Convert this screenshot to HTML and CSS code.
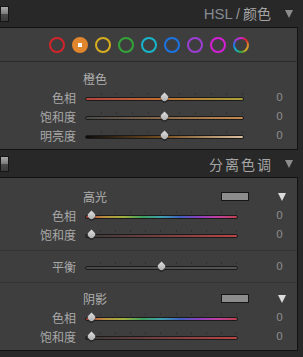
FILE: index.html
```html
<html>
  <head>
    <title>HSL / 颜色</title>
    <meta name="viewport" content="width=device-width, initial-scale=1.0" />
    <link rel="stylesheet" href="styles.css">
  </head>
  <body>
    <div class="hdr">
      <span class="sw"></span>
      <span class="ttl"><span class="en">HSL</span> <span class="sl">/</span> 颜色</span>
      <span class="tri"></span>
    </div>

    <div class="panel dots">
      <span class="dot red"></span>
      <span class="dot orange on"></span>
      <span class="dot yellow"></span>
      <span class="dot green"></span>
      <span class="dot aqua"></span>
      <span class="dot blue"></span>
      <span class="dot purple"></span>
      <span class="dot magenta"></span>
      <span class="dot all"></span>
    </div>

    <div class="panel hsl">
      <div class="row"><span class="lbl"></span><span class="name">橙色</span></div>
      <div class="row">
        <span class="lbl">色相</span>
        <div class="track o-hue"><span class="thumb" style="--v:0.5"></span></div>
        <span class="val">0</span>
      </div>
      <div class="row">
        <span class="lbl">饱和度</span>
        <div class="track o-sat"><span class="thumb" style="--v:0.5"></span></div>
        <span class="val">0</span>
      </div>
      <div class="row">
        <span class="lbl">明亮度</span>
        <div class="track o-lum"><span class="thumb" style="--v:0.5"></span></div>
        <span class="val">0</span>
      </div>
    </div>

    <div class="hdr">
      <span class="sw"></span>
      <span class="ttl wide">分离色调</span>
      <span class="tri"></span>
    </div>

    <div class="panel split">
      <div class="blk first">
        <div class="row">
          <span class="lbl"></span><span class="name">高光</span>
          <span class="swatch"></span><span class="wtri"></span>
        </div>
        <div class="row">
          <span class="lbl">色相</span>
          <div class="track rainbow"><span class="thumb" style="--v:0"></span></div>
          <span class="val">0</span>
        </div>
        <div class="row">
          <span class="lbl">饱和度</span>
          <div class="track red-sat"><span class="thumb" style="--v:0"></span></div>
          <span class="val">0</span>
        </div>
      </div>
      <div class="blk">
        <div class="row">
          <span class="lbl">平衡</span>
          <div class="track bal"><span class="thumb" style="--v:0.5"></span></div>
          <span class="val">0</span>
        </div>
      </div>
      <div class="blk last">
        <div class="row">
          <span class="lbl"></span><span class="name">阴影</span>
          <span class="swatch"></span><span class="wtri"></span>
        </div>
        <div class="row">
          <span class="lbl">色相</span>
          <div class="track rainbow"><span class="thumb" style="--v:0"></span></div>
          <span class="val">0</span>
        </div>
        <div class="row">
          <span class="lbl">饱和度</span>
          <div class="track red-sat"><span class="thumb" style="--v:0"></span></div>
          <span class="val">0</span>
        </div>
      </div>
    </div>
  </body>
</html>
```

FILE: styles.css
```css
body {
  margin: 0;
  background-color: #282828;
  font-family: "Noto Sans CJK SC", "Noto Sans", sans-serif;
  color: #a8a8a8;
}

/* headers */
.hdr {
  height: 27px;
  display: flex;
  align-items: center;
  padding-right: 10px;
  background-color: #282828;
}
.sw {
  width: 7px;
  height: 14px;
  border: 1px solid #151515;
  background: linear-gradient(#a8a8a8, #7a7a7a 50%, #4a4a4a 50%, #3a3a3a);
}
.ttl {
  flex: 1;
  text-align: right;
  font-size: 14px;
  line-height: 16px;
  color: #a6a6a6;
  margin-right: 14px;
}
.ttl.wide {
  letter-spacing: 2px;
  margin-right: 12px;
}
.en {
  font-family: "Liberation Sans", sans-serif;
  font-size: 15px;
  color: #858b93;
}
.sl {
  font-family: "Liberation Sans", sans-serif;
  color: #9a9a9a;
}
.tri {
  width: 0;
  height: 0;
  border-left: 4.5px solid transparent;
  border-right: 4.5px solid transparent;
  border-top: 8px solid #8c8c8c;
}

/* panels */
.panel {
  margin-right: 5px;
  background-color: #3e3e3e;
  border-top: 1px solid #121212;
  border-right: 1px solid #121212;
}
.dots {
  height: 33px;
  display: flex;
  align-items: center;
  gap: 7px;
  padding-left: 49px;
  border-bottom: 1px solid #2a2a2a;
}
.hsl {
  border-top: 0;
  height: 80px;
  padding-top: 7px;
  border-bottom: 1px solid #121212;
}
.split {
  border-bottom: 1px solid #121212;
}

.dot {
  width: 12px;
  height: 12px;
  border-radius: 50%;
  border: 2px solid #888;
  position: relative;
}
.red { border-color: #d3242b; }
.orange { border-color: #e0862c; background-color: #e0862c; }
.yellow { border-color: #d8ad1e; }
.green { border-color: #34a33a; }
.aqua { border-color: #17b6cb; }
.blue { border-color: #1c74e4; }
.purple { border-color: #9b3fd4; }
.magenta { border-color: #d51fd6; }
.on::after {
  content: "";
  position: absolute;
  left: 4px;
  top: 4px;
  width: 4px;
  height: 4px;
  background-color: white;
}
.all {
  border: 0;
  width: 16px;
  height: 16px;
  background: conic-gradient(#d51fd6, #d3242b, #e0862c, #d8ad1e, #34a33a, #17b6cb, #1c74e4, #9b3fd4, #d51fd6);
}
.all::after {
  content: "";
  position: absolute;
  left: 2px;
  top: 2px;
  width: 12px;
  height: 12px;
  border-radius: 50%;
  background-color: #3e3e3e;
}

/* rows */
.row {
  height: 19px;
  display: flex;
  align-items: center;
  font-size: 12px;
}
.lbl {
  width: 76px;
  margin-right: 9px;
  text-align: right;
  flex-shrink: 0;
}
.name {
  flex: 1;
  margin-left: -2px;
  color: #b0b0b0;
}
.val {
  width: 53px;
  box-sizing: border-box;
  padding-right: 14px;
  text-align: right;
  font-family: "DejaVu Sans", sans-serif;
  font-size: 11px;
  color: #8a8a8a;
}
.split .val {
  width: 59px;
}

.blk {
  padding: 6px 0;
  border-bottom: 1px solid #353535;
}
.blk.first {
  padding-top: 9px;
}
.blk.last {
  padding-bottom: 4px;
  border-bottom: 0;
}

/* sliders */
.track {
  flex: 1;
  height: 2px;
  border: 1px solid #1b1b1b;
  border-radius: 2px;
  position: relative;
  margin-top: 2px;
}
.track::before {
  content: "";
  position: absolute;
  left: 0;
  right: 0;
  top: -5px;
  height: 2px;
  background: repeating-linear-gradient(to right, transparent 0, transparent calc(10% - 1px), #2f2f2f calc(10% - 1px), #2f2f2f 10%);
}
.thumb {
  position: absolute;
  top: -4px;
  left: calc(5px + (100% - 10px) * var(--v));
  margin-left: -3.5px;
  width: 7px;
  height: 7px;
  border-radius: 0 45% 50% 45%;
  transform: rotate(45deg);
  background: linear-gradient(135deg, #e0e0e0, #a8a8a8);
  box-shadow: 1px 1px 0 #222;
}
.o-hue { background: linear-gradient(to right, #b8423f, #c0702f 50%, #a8a23a); }
.o-sat { background: linear-gradient(to right, #4a4a4a, #8a6a4a 50%, #c48a50); }
.o-lum { background: linear-gradient(to right, #0c0c0c, #7a5020 50%, #dcc0a0); }
.rainbow { background: linear-gradient(to right, #b84040, #b89040, #a0b040, #40a060, #40a0b0, #4060c0, #9040c0, #c040a0, #c04050); }
.red-sat { background: linear-gradient(to right, #3a3a3a, #b84545); }
.bal { background: linear-gradient(to right, #484848, #555); }

.swatch {
  width: 26px;
  height: 7px;
  border: 1px solid #161616;
  background-color: #8c8c8c;
  margin-right: 29px;
}
.wtri {
  width: 0;
  height: 0;
  border-left: 4.5px solid transparent;
  border-right: 4.5px solid transparent;
  border-top: 8px solid #dcdcdc;
  margin-right: 11px;
}
```
